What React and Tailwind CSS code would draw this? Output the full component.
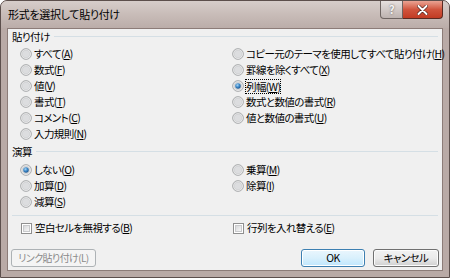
import React from 'react'

const font = {
  fontFamily: '"Noto Sans CJK JP", "Noto Sans", sans-serif',
}

function Radio({ checked }) {
  return (
    <svg width="12" height="12" viewBox="0 0 13 13" className="shrink-0">
      <defs>
        <linearGradient id="rg" x1="0" y1="0" x2="1" y2="1">
          <stop offset="0" stopColor="#e9e9e9" />
          <stop offset="1" stopColor="#ffffff" />
        </linearGradient>
        <radialGradient id="rb" cx="0.4" cy="0.35" r="0.7">
          <stop offset="0" stopColor="#a9d6f5" />
          <stop offset="0.5" stopColor="#3d89c9" />
          <stop offset="1" stopColor="#1a4f86" />
        </radialGradient>
      </defs>
      <circle cx="6.5" cy="6.5" r="5.8" fill="url(#rg)" stroke="#a0a2a4" strokeWidth="1" />
      <circle cx="6.5" cy="6.5" r="4.2" fill="#dcdddf" stroke="#c7c9cb" strokeWidth="0.6" />
      {checked && <circle cx="6.5" cy="6.5" r="3" fill="url(#rb)" />}
    </svg>
  )
}

function Check() {
  return (
    <span className="w-[11px] h-[11px] shrink-0 border border-[#8f8f8f] bg-white p-[1px]">
      <span className="block w-full h-full bg-gradient-to-br from-[#d8d9db] to-[#f7f7f7] border border-[#c9cacc]" />
    </span>
  )
}

function Label({ text, k }) {
  return (
    <span className="whitespace-nowrap">
      {text}(<span className="underline underline-offset-1">{k}</span>)
    </span>
  )
}

function Opt({ text, k, checked, focus }) {
  return (
    <div className="h-[16px] flex items-center gap-[2px]">
      <Radio checked={checked} />
      <span className={focus ? 'outline outline-1 outline-dotted outline-black leading-[13px]' : ''}>
        <Label text={text} k={k} />
      </span>
    </div>
  )
}

function Group({ title }) {
  return (
    <div className="h-[13px] flex items-center pl-[4px] pr-[4px] gap-[4px]">
      <span className="whitespace-nowrap">{title}</span>
      <div className="flex-1 h-0 border-t border-[#d5dfe5]" />
    </div>
  )
}

export default function App() {
  const pasteLeft = [
    ['すべて', 'A'],
    ['数式', 'F'],
    ['値', 'V'],
    ['書式', 'T'],
    ['コメント', 'C'],
    ['入力規則', 'N'],
  ]
  const pasteRight = [
    ['コピー元のテーマを使用してすべて貼り付け', 'H'],
    ['罫線を除くすべて', 'X'],
    ['列幅', 'W', true],
    ['数式と数値の書式', 'R'],
    ['値と数値の書式', 'U'],
  ]

  return (
    <div
      className="w-[450px] h-[278px] overflow-hidden bg-[#b9aaa6] rounded-t-[7px] border border-[#5c4f4c] flex flex-col text-[10.5px] tracking-[-0.6px] text-black [font-feature-settings:'palt']"
      style={font}
    >
      {/* Title bar */}
      <div className="h-[27px] shrink-0 flex items-start bg-gradient-to-b from-[#d6cdca] via-[#c8bcb8] to-[#bbada9]">
        <div className="pl-[7px] pt-[5px] text-[11px] tracking-[-0.3px] text-black">形式を選択して貼り付け</div>
        <div className="ml-auto mr-[6px] flex">
          <div className="w-[23px] h-[18px] rounded-bl-[4px] border border-t-0 border-[#6e6461] bg-gradient-to-b from-[#e6e0de] to-[#bdb2af] flex items-center justify-center text-[11px] font-bold text-[#f7f5f4] [text-shadow:0_0_2px_#555]">
            ?
          </div>
          <div className="w-[40px] h-[18px] rounded-br-[4px] border border-t-0 border-l-0 border-[#5a2a22] bg-gradient-to-b from-[#e9a393] via-[#d0543d] to-[#c13b23] flex items-center justify-center">
            <svg width="11" height="10" viewBox="0 0 11 10">
              <path d="M1.5 1 L9.5 9 M9.5 1 L1.5 9" stroke="#4a1a12" strokeWidth="3.2" strokeLinecap="round" />
              <path d="M1.5 1 L9.5 9 M9.5 1 L1.5 9" stroke="#ffffff" strokeWidth="2" strokeLinecap="round" />
            </svg>
          </div>
        </div>
      </div>

      {/* Client area */}
      <div className="mx-[6px] h-[243px] shrink-0 border border-[#8c7c78] bg-[#f0f0f0] flex flex-col pt-[1px]">
        <Group title="貼り付け" />
        <div className="mt-[3px] grid grid-cols-[212px_1fr] pl-[12px]">
          <div className="flex flex-col">
            {pasteLeft.map(([t, k]) => (
              <Opt key={k} text={t} k={k} />
            ))}
          </div>
          <div className="flex flex-col">
            {pasteRight.map(([t, k, c]) => (
              <Opt key={k} text={t} k={k} checked={c} focus={c} />
            ))}
          </div>
        </div>

        <div className="mt-[3px]">
          <Group title="演算" />
        </div>
        <div className="mt-[4px] grid grid-cols-[212px_1fr] pl-[12px]">
          <div className="flex flex-col">
            <Opt text="しない" k="O" checked />
            <Opt text="加算" k="D" />
            <Opt text="減算" k="S" />
          </div>
          <div className="flex flex-col">
            <Opt text="乗算" k="M" />
            <Opt text="除算" k="I" />
          </div>
        </div>

        <div className="mt-[5px] mx-[4px] border-t border-[#d5dfe5]" />

        <div className="mt-[4px] grid grid-cols-[212px_1fr] pl-[13px]">
          <div className="h-[16px] flex items-center gap-[3px]">
            <Check />
            <Label text="空白セルを無視する" k="B" />
          </div>
          <div className="h-[16px] flex items-center gap-[3px]">
            <Check />
            <Label text="行列を入れ替える" k="E" />
          </div>
        </div>

        <div className="mt-[13px] flex items-center px-[3px]">
          <button className="w-[85px] h-[18px] rounded-[3px] border border-[#adb2b5] bg-[#f4f4f4] text-[#8a8a8a] text-[10px] whitespace-nowrap leading-none flex items-center justify-center">
            リンク貼り付け(L)
          </button>
          <button className="ml-auto w-[64px] h-[18px] rounded-[3px] border border-[#3c7fb1] bg-gradient-to-b from-[#eaf6fd] via-[#d9f0fc] to-[#bee6fd] shadow-[inset_0_0_0_1px_#ffffff] text-[10.5px] leading-none flex items-center justify-center">
            OK
          </button>
          <button className="ml-[8px] w-[66px] h-[18px] rounded-[3px] border border-[#707070] bg-gradient-to-b from-[#f2f2f2] via-[#ebebeb] to-[#cfcfcf] shadow-[inset_0_0_0_1px_#fcfcfc] text-[10.5px] leading-none flex items-center justify-center">
            キャンセル
          </button>
        </div>
      </div>
    </div>
  )
}
